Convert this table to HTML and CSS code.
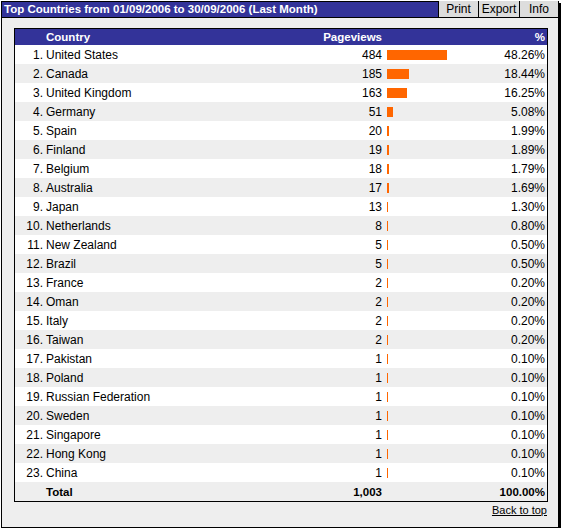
FILE: index.html
```html
<!DOCTYPE html>
<html>
<head>
<meta charset="utf-8">
<link rel="stylesheet" href="styles.css">
</head>
<body>
<div class="panel">
  <div class="titlebar">
    <div class="title">Top Countries from 01/09/2006 to 30/09/2006 (Last Month)</div>
    <div class="btns">
      <span class="btn btn-print">Print</span><span class="btn btn-export">Export</span><span class="btn btn-info">Info</span>
    </div>
  </div>
  <div class="content">
    <div class="tablebox">
      <table class="data">
        <colgroup>
          <col class="c-rank"><col class="c-name"><col class="c-pv"><col class="c-bar"><col class="c-pct">
        </colgroup>
        <thead>
          <tr class="head"><th class="rank"></th><th class="name">Country</th><th class="pv">Pageviews</th><th class="bar"></th><th class="pct">%</th></tr>
        </thead>
        <tbody>
          <tr><td class="rank">1.</td><td class="name">United States</td><td class="pv">484</td><td class="bar"><span class="b" style="width:60px"></span></td><td class="pct">48.26%</td></tr>
          <tr><td class="rank">2.</td><td class="name">Canada</td><td class="pv">185</td><td class="bar"><span class="b" style="width:22px"></span></td><td class="pct">18.44%</td></tr>
          <tr><td class="rank">3.</td><td class="name">United Kingdom</td><td class="pv">163</td><td class="bar"><span class="b" style="width:20px"></span></td><td class="pct">16.25%</td></tr>
          <tr><td class="rank">4.</td><td class="name">Germany</td><td class="pv">51</td><td class="bar"><span class="b" style="width:6px"></span></td><td class="pct">5.08%</td></tr>
          <tr><td class="rank">5.</td><td class="name">Spain</td><td class="pv">20</td><td class="bar"><span class="b" style="width:2px"></span></td><td class="pct">1.99%</td></tr>
          <tr><td class="rank">6.</td><td class="name">Finland</td><td class="pv">19</td><td class="bar"><span class="b" style="width:2px"></span></td><td class="pct">1.89%</td></tr>
          <tr><td class="rank">7.</td><td class="name">Belgium</td><td class="pv">18</td><td class="bar"><span class="b" style="width:2px"></span></td><td class="pct">1.79%</td></tr>
          <tr><td class="rank">8.</td><td class="name">Australia</td><td class="pv">17</td><td class="bar"><span class="b" style="width:2px"></span></td><td class="pct">1.69%</td></tr>
          <tr><td class="rank">9.</td><td class="name">Japan</td><td class="pv">13</td><td class="bar"><span class="b" style="width:1px"></span></td><td class="pct">1.30%</td></tr>
          <tr><td class="rank">10.</td><td class="name">Netherlands</td><td class="pv">8</td><td class="bar"><span class="b" style="width:1px"></span></td><td class="pct">0.80%</td></tr>
          <tr><td class="rank">11.</td><td class="name">New Zealand</td><td class="pv">5</td><td class="bar"><span class="b" style="width:1px"></span></td><td class="pct">0.50%</td></tr>
          <tr><td class="rank">12.</td><td class="name">Brazil</td><td class="pv">5</td><td class="bar"><span class="b" style="width:1px"></span></td><td class="pct">0.50%</td></tr>
          <tr><td class="rank">13.</td><td class="name">France</td><td class="pv">2</td><td class="bar"><span class="b" style="width:1px"></span></td><td class="pct">0.20%</td></tr>
          <tr><td class="rank">14.</td><td class="name">Oman</td><td class="pv">2</td><td class="bar"><span class="b" style="width:1px"></span></td><td class="pct">0.20%</td></tr>
          <tr><td class="rank">15.</td><td class="name">Italy</td><td class="pv">2</td><td class="bar"><span class="b" style="width:1px"></span></td><td class="pct">0.20%</td></tr>
          <tr><td class="rank">16.</td><td class="name">Taiwan</td><td class="pv">2</td><td class="bar"><span class="b" style="width:1px"></span></td><td class="pct">0.20%</td></tr>
          <tr><td class="rank">17.</td><td class="name">Pakistan</td><td class="pv">1</td><td class="bar"><span class="b" style="width:1px"></span></td><td class="pct">0.10%</td></tr>
          <tr><td class="rank">18.</td><td class="name">Poland</td><td class="pv">1</td><td class="bar"><span class="b" style="width:1px"></span></td><td class="pct">0.10%</td></tr>
          <tr><td class="rank">19.</td><td class="name">Russian Federation</td><td class="pv">1</td><td class="bar"><span class="b" style="width:1px"></span></td><td class="pct">0.10%</td></tr>
          <tr><td class="rank">20.</td><td class="name">Sweden</td><td class="pv">1</td><td class="bar"><span class="b" style="width:1px"></span></td><td class="pct">0.10%</td></tr>
          <tr><td class="rank">21.</td><td class="name">Singapore</td><td class="pv">1</td><td class="bar"><span class="b" style="width:1px"></span></td><td class="pct">0.10%</td></tr>
          <tr><td class="rank">22.</td><td class="name">Hong Kong</td><td class="pv">1</td><td class="bar"><span class="b" style="width:1px"></span></td><td class="pct">0.10%</td></tr>
          <tr><td class="rank">23.</td><td class="name">China</td><td class="pv">1</td><td class="bar"><span class="b" style="width:1px"></span></td><td class="pct">0.10%</td></tr>
        </tbody>
        <tfoot>
          <tr class="total"><td class="rank"></td><td class="name">Total</td><td class="pv">1,003</td><td class="bar"></td><td class="pct">100.00%</td></tr>
        </tfoot>
      </table>
    </div>
    <div class="backrow"><a class="backlink" href="#">Back to top</a></div>
  </div>
</div>
</body>
</html>
```
FILE: styles.css
```css
html, body {
  margin: 0;
  padding: 0;
  background: #ffffff;
}
body {
  font-family: "Liberation Sans", Arial, sans-serif;
  font-size: 12px;
  color: #000;
}
.panel {
  box-sizing: border-box;
  margin: 1px 0 0 1px;
  width: 558px;
  height: 527px;
  border: 1px solid #000;
  box-shadow: 2px 2px 0 #000;
  background: #eeeeee;
  display: flex;
  flex-direction: column;
}
.titlebar {
  display: flex;
  justify-content: space-between;
  align-items: stretch;
  height: 15px;
  background: #333399;
  border-bottom: 1px solid #000;
}
.title {
  color: #fff;
  font-weight: bold;
  font-size: 11.5px;
  line-height: 15px;
  padding-left: 2px;
  white-space: nowrap;
}
.btns {
  display: flex;
}
.btn {
  box-sizing: border-box;
  border-left: 1px solid #000;
  background: #dddddd;
  text-align: center;
  line-height: 15px;
  font-size: 12px;
  margin-top: -1px;
  padding-top: 1px;
  height: 16px;
}
.btn-print { width: 40px; }
.btn-export { width: 41px; }
.btn-info { width: 39px; }
.content {
  padding: 10px 0 0 12px;
}
.tablebox {
  width: 532px;
  border: 1px solid #000;
  background: #fff;
}
.data {
  width: 532px;
  border-collapse: collapse;
  border-spacing: 0;
  table-layout: fixed;
}
.c-rank { width: 28px; }
.c-name { width: 257px; }
.c-pv { width: 84px; }
.c-bar { width: 76px; }
.c-pct { width: 87px; }
.data th, .data td {
  padding: 1px 0 0 0;
  height: 18px;
  line-height: 18px;
  white-space: nowrap;
  overflow: hidden;
}
.data .head th {
  background: #333399;
  color: #fff;
  font-weight: bold;
  font-size: 11.5px;
  padding-top: 0;
  height: 16px;
  line-height: 16px;
}
.data tbody tr:nth-child(even) td {
  background: #eeeeee;
}
.total td {
  background: #eeeeee;
  font-weight: bold;
  font-size: 11.5px;
}
.rank { text-align: right; }
.name { text-align: left; padding-left: 3px !important; }
.pv { text-align: right; padding-right: 2px !important; }
.bar { text-align: left; padding-left: 3px !important; }
.pct { text-align: right; padding-right: 2px !important; }
.b {
  display: inline-block;
  height: 10px;
  background: #ff6600;
  vertical-align: -1px;
}
.backrow {
  width: 534px;
  text-align: right;
  padding-top: 2px;
  line-height: 13px;
  font-size: 11px;
}
.backlink {
  color: #000;
  text-decoration: underline;
  padding-right: 1px;
}
```
